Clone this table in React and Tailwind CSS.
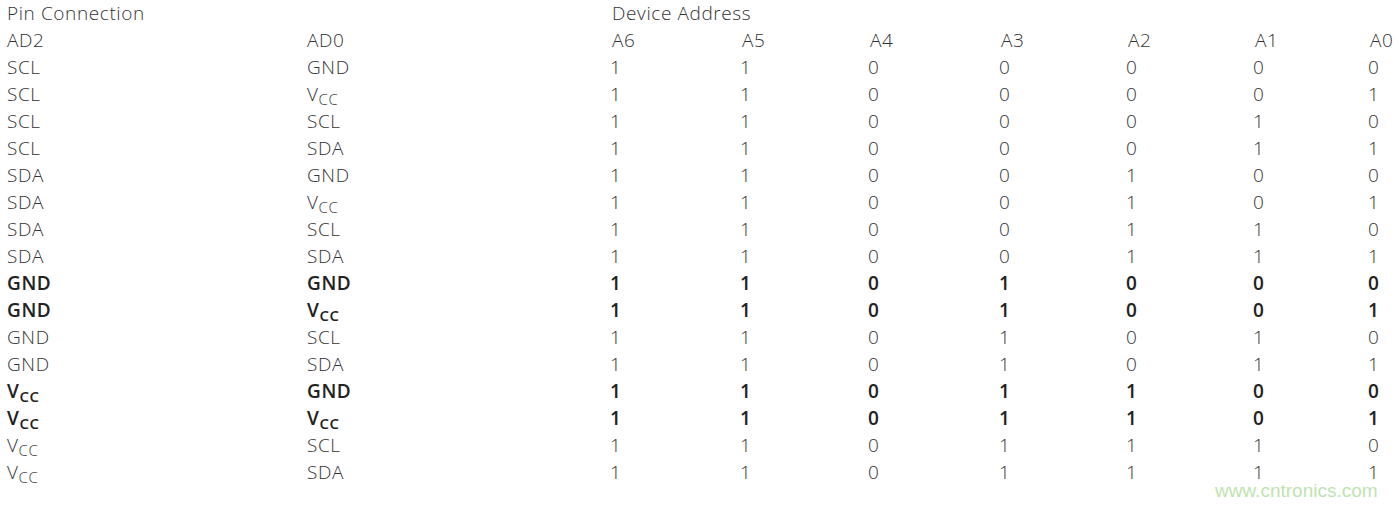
const V = () => (
  <span>
    V<sub className="text-[15px] tracking-[0.5px]">CC</sub>
  </span>
);

const rows = [
  ["SCL", "GND", "1100000"],
  ["SCL", "VCC", "1100001"],
  ["SCL", "SCL", "1100010"],
  ["SCL", "SDA", "1100011"],
  ["SDA", "GND", "1100100"],
  ["SDA", "VCC", "1100101"],
  ["SDA", "SCL", "1100110"],
  ["SDA", "SDA", "1100111"],
  ["GND", "GND", "1101000", true],
  ["GND", "VCC", "1101001", true],
  ["GND", "SCL", "1101010"],
  ["GND", "SDA", "1101011"],
  ["VCC", "GND", "1101100", true],
  ["VCC", "VCC", "1101101", true],
  ["VCC", "SCL", "1101110"],
  ["VCC", "SDA", "1101111"],
];

const pin = (p) => (p === "VCC" ? <V /> : p);

export default function App() {
  return (
    <div className="relative w-[1399px] h-[506px] bg-white overflow-hidden" style={{ fontFamily: '"Open Sans", sans-serif' }}>
      <div className="grid grid-cols-[300px_305px_130px_128px_131px_127px_127px_115px_auto] pl-[7px] text-[19px] tracking-[0.6px] leading-[27px] text-[#333] font-light">
        <div className="col-span-2">Pin Connection</div>
        <div className="col-span-7">Device Address</div>
        <div>AD2</div>
        <div>AD0</div>
        {["A6", "A5", "A4", "A3", "A2", "A1", "A0"].map((a) => (
          <div key={a}>{a}</div>
        ))}
        {rows.map(([a, b, bits, bold], i) => (
          <div key={i} className={`contents ${bold ? "font-semibold text-[#222]" : ""}`}>
            <div>{pin(a)}</div>
            <div>{pin(b)}</div>
            {bits.split("").map((d, j) => (
              <div key={j} className="-ml-[2px]">{d}</div>
            ))}
          </div>
        ))}
      </div>
      <div
        className="absolute left-[1215px] top-[477px] text-[19px] text-[#bfe3b0]"
        style={{ fontFamily: '"Liberation Sans", Arial, sans-serif' }}
      >
        www.cntronics.com
      </div>
    </div>
  );
}
